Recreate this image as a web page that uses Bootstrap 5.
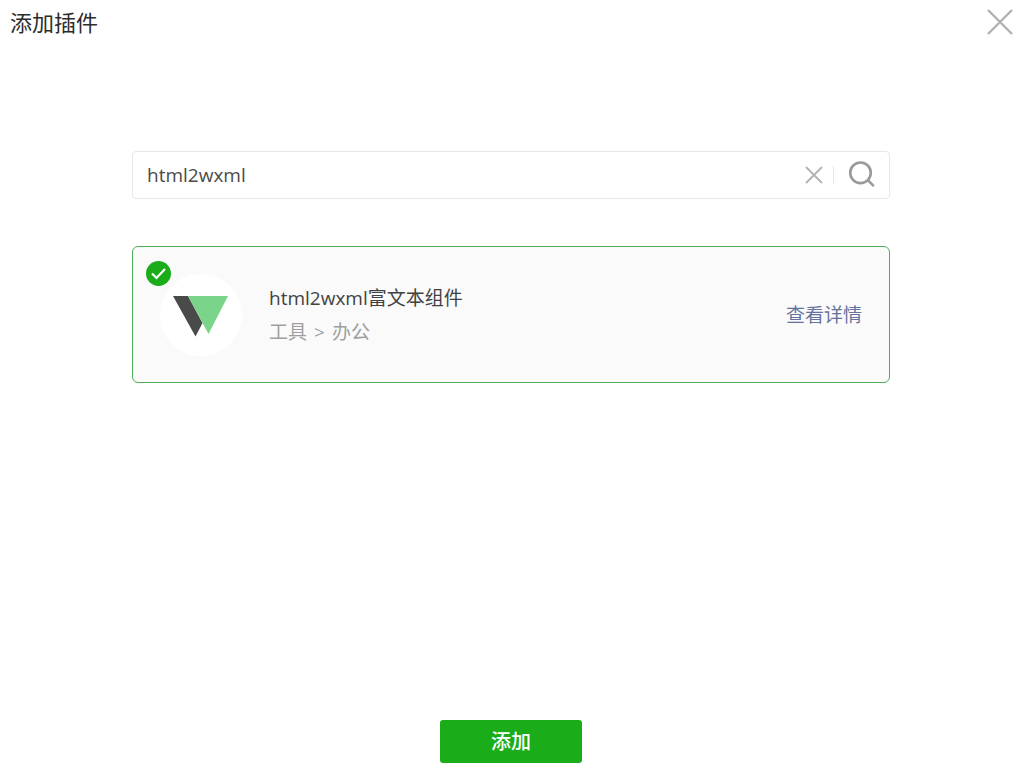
<!DOCTYPE html>
<html lang="zh-CN">
<head>
<meta charset="utf-8">
<meta name="viewport" content="width=device-width, initial-scale=1">
<title>添加插件</title>
<link href="https://cdn.jsdelivr.net/npm/bootstrap@5.3.0/dist/css/bootstrap.min.css" rel="stylesheet">
<style>
  body { font-family: "Open Sans", "Noto Sans CJK SC", sans-serif; font-size: 19px; line-height: 28px; color: #424242; font-weight: 400; }
  .dialog { padding-right: 2px; }
  .dialog-head { padding: 0 6px 0 10px; }
  .dialog-title { font-size: 22px; line-height: 44px; font-weight: 400; color: #2c2c2c; }
  .icon-btn { background: none; border: 0; padding: 0; line-height: 0; color: #b2b2b2; }
  .dialog-body { width: 100%; max-width: 758px; padding-top: 107px; }
  .search-box { height: 48px; border: 1px solid #e7e7e7; border-radius: 4px; padding: 0 14px; margin-bottom: 47px; }
  .search-box input { font-size: 19px; line-height: 28px; color: #4a4a4a; }
  .search-box input:focus { box-shadow: none; }
  .divider { width: 1px; height: 18px; background: #e7e7eb; margin: 0 15px 0 9px; }
  .plugin { border: 1px solid #4fae58; border-radius: 6px; background: #fafafa; height: 137px; padding: 0 27px; gap: 27px; }
  .plugin .form-check-input { top: 14px; left: 13px; width: 25px; height: 25px; margin: 0; border: 0; border-radius: 50%; }
  .plugin .form-check-input:checked { background-color: #1aad19; background-size: 25px 25px;
    background-image: url("data:image/svg+xml,%3csvg xmlns='http://www.w3.org/2000/svg' viewBox='0 0 25 25'%3e%3cpath fill='none' stroke='%23fff' stroke-width='2.2' d='M6 12.500l4.500 4.500L19 8'/%3e%3c/svg%3e"); }
  .plugin-name { line-height: 34px; cursor: pointer; }
  .plugin-type { line-height: 34px; color: #9f9f9f; gap: 7px; }
  .detail-link { color: #65739c; }
  .btn-add { background: #1aad19; border: 0; border-radius: 3px; width: 142px; height: 43px; padding: 1px 0 0; font-size: 20px; font-weight: 500; color: #fff; margin-bottom: 10px; }
  .btn-add:hover { background: #179b16; color: #fff; }
</style>
</head>
<body>
<div class="dialog min-vh-100 d-flex flex-column">
  <header class="dialog-head d-flex justify-content-between align-items-center">
    <h1 class="dialog-title m-0">添加插件</h1>
    <button class="icon-btn" type="button" aria-label="关闭">
      <svg width="32" height="32" viewBox="0 0 32 32" fill="none" stroke="currentColor" stroke-width="2.400"><path d="M4 4l24 24M28 4L4 28"/></svg>
    </button>
  </header>
  <main class="dialog-body mx-auto flex-grow-1">
    <form class="search-box d-flex align-items-center" role="search">
      <input class="form-control border-0 p-0 bg-transparent" type="text" value="html2wxml" aria-label="搜索插件">
      <button class="icon-btn" type="button" aria-label="清除">
        <svg width="20" height="20" viewBox="0 0 20 20" fill="none" stroke="currentColor" stroke-width="1.800"><path d="M2 2l16 16M18 2L2 18"/></svg>
      </button>
      <span class="divider flex-shrink-0"></span>
      <button class="icon-btn" type="submit" aria-label="搜索">
        <svg width="26" height="28" viewBox="0 0 26 28" fill="none" stroke="#999" stroke-width="2.600"><circle cx="11.500" cy="11.800" r="10.300"/><path d="M18.800 19.100l6 6"/></svg>
      </button>
    </form>
    <div class="plugin d-flex align-items-center position-relative">
      <input class="form-check-input position-absolute" type="checkbox" id="plugin1" checked>
      <svg class="flex-shrink-0" width="82" height="82" viewBox="0 0 82 82" aria-hidden="true">
        <circle cx="41" cy="41" r="41" fill="#fff"/>
        <path fill="#4a4a4a" d="M13 22h15l14.500 27-7 13.500z"/>
        <path fill="#7ad489" d="M28 22h40L48.500 60z"/>
      </svg>
      <div class="flex-grow-1">
        <label class="plugin-name d-block" for="plugin1">html2wxml富文本组件</label>
        <div class="plugin-type d-flex"><span>工具</span><span>&gt;</span><span>办公</span></div>
      </div>
      <a class="detail-link text-decoration-none" href="#">查看详情</a>
    </div>
  </main>
  <footer class="text-center">
    <button class="btn btn-add" type="button">添加</button>
  </footer>
</div>
<script src="https://cdn.jsdelivr.net/npm/bootstrap@5.3.0/dist/js/bootstrap.bundle.min.js"></script>
</body>
</html>
